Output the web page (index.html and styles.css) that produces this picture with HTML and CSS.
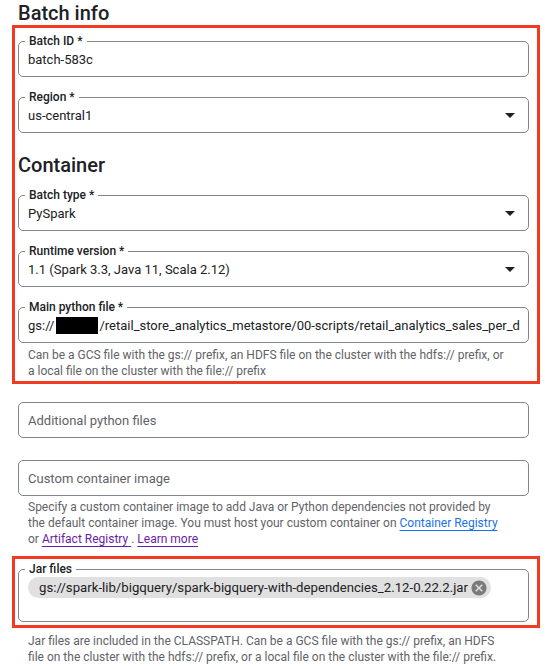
FILE: index.html
```html
<!DOCTYPE html>
<html lang="en">
<head>
<meta charset="utf-8">
<title>Batch info</title>
<link rel="stylesheet" href="styles.css">
</head>
<body>
<div class="page">
  <h2 class="heading first">Batch info</h2>
  <div class="box box-top">
    <div class="field">
      <span class="label">Batch ID *</span>
      <span class="value">batch-583c</span>
    </div>
    <div class="field select">
      <span class="label">Region *</span>
      <span class="value">us-central1</span>
      <span class="arrow"></span>
    </div>
    <h2 class="heading second">Container</h2>
    <div class="field select first-in-section">
      <span class="label">Batch type *</span>
      <span class="value">PySpark</span>
      <span class="arrow"></span>
    </div>
    <div class="field select">
      <span class="label">Runtime version *</span>
      <span class="value">1.1 (Spark 3.3, Java 11, Scala 2.12)</span>
      <span class="arrow"></span>
    </div>
    <div class="field">
      <span class="label">Main python file *</span>
      <span class="value clip">gs://<span class="redact"></span>/retail_store_analytics_metastore/00-scripts/retail_analytics_sales_per_dept.py</span>
    </div>
    <p class="hint">Can be a GCS file with the gs:// prefix, an HDFS file on the cluster with the hdfs:// prefix, or<br>a local file on the cluster with the file:// prefix</p>
  </div>

  <div class="field plain additional">
    <span class="placeholder">Additional python files</span>
  </div>
  <div class="field plain custom">
    <span class="placeholder">Custom container image</span>
  </div>
  <p class="hint plain-hint">Specify a custom container image to add Java or Python dependencies not provided by<br>the default container image. You must host your custom container on <a class="link" href="#">Container Registry</a><br>or <a class="link visited" href="#">Artifact Registry </a>. <a class="link visited" href="#">Learn more</a></p>

  <div class="box box-jar">
    <div class="field jar">
      <span class="label">Jar files</span>
      <span class="chip">
        <span class="chip-text">gs://spark-lib/bigquery/spark-bigquery-with-dependencies_2.12-0.22.2.jar</span>
        <svg class="chip-x" viewBox="0 0 24 24" width="18" height="18"><path d="M12 2C6.470 2 2 6.470 2 12s4.470 10 10 10 10-4.470 10-10S17.530 2 12 2zm5 13.590L15.590 17 12 13.410 8.410 17 7 15.590 10.590 12 7 8.410 8.410 7 12 10.590 15.590 7 17 8.410 13.410 12 17 15.590z"/></svg>
      </span>
    </div>
  </div>
  <p class="hint plain-hint jar-hint">Jar files are included in the CLASSPATH. Can be a GCS file with the gs:// prefix, an HDFS<br>file on the cluster with the hdfs:// prefix, or a local file on the cluster with the file:// prefix.</p>
</div>
</body>
</html>
```

FILE: styles.css
```css
* { box-sizing: border-box; }
html, body { margin: 0; padding: 0; background: #ffffff; }
body {
  font-family: Roboto, "Liberation Sans", Arial, sans-serif;
  color: #202124;
  width: 545px;
  height: 669px;
  overflow: hidden;
}
.page {
  padding-left: 12px;
  display: flex;
  flex-direction: column;
  align-items: flex-start;
}
.heading {
  margin: 0;
  font-size: 20px;
  line-height: 24px;
  font-weight: 500;
  color: #202124;
}
.heading.first { margin-top: 1px; margin-left: 6px; }
.heading.second { margin-top: 20px; }

.box {
  width: 528px;
  border: 3px solid #f03a22;
  padding: 13px 8px 2px 3px;
  display: flex;
  flex-direction: column;
}
.box-jar { margin-top: 9px; padding: 10px 8px 3px 3px; }

.field {
  position: relative;
  width: 511px;
  height: 36px;
  border: 1px solid #80868b;
  border-radius: 5px;
  padding: 0 8px 0 9px;
  display: flex;
  align-items: center;
  font-size: 13px;
  line-height: 20px;
  flex-shrink: 0;
}
.box .field + .field { margin-top: 20px; }
.box .field.first-in-section { margin-top: 18px; }

.label {
  position: absolute;
  left: 6px;
  top: -9px;
  padding: 0 4px;
  background: #ffffff;
  font-size: 12px;
  line-height: 16px;
  font-weight: 500;
  color: #202124;
  white-space: nowrap;
}
.value { color: #202124; white-space: nowrap; padding-top: 1px; }
.value.clip { overflow: hidden; display: flex; align-items: center; }
.redact {
  display: inline-block;
  width: 42px;
  height: 17px;
  background: #000;
  margin: 0 1px 0 2px;
  flex-shrink: 0;
}
.placeholder { color: #5f6368; white-space: nowrap; padding-top: 1px; }

.select .arrow {
  position: absolute;
  right: 13px;
  top: 50%;
  margin-top: -2px;
  width: 0;
  height: 0;
  border-left: 5px solid transparent;
  border-right: 5px solid transparent;
  border-top: 5px solid #202124;
}

.hint {
  margin: 4px 0 0 0;
  padding-left: 10px;
  font-size: 12px;
  line-height: 16px;
  color: #5f6368;
  white-space: nowrap;
}
.plain { margin-left: 6px; }
.plain-hint { margin-left: 6px; margin-top: 3px; }
.additional { margin-top: 18px; }
.custom { margin-top: 22px; }
.jar-hint { margin-top: 5px; }

.link {
  color: #1a73e8;
  text-decoration: underline;
  text-underline-offset: 3px;
}
.link.visited { color: #681da8; }

.field.jar {
  height: 53px;
  align-items: flex-start;
  padding-top: 7px;
}
.chip {
  display: inline-flex;
  align-items: center;
  height: 21px;
  background: #e0e0e0;
  border-radius: 11px;
  padding: 0 3px 0 11px;
  font-size: 13.2px;
  color: #202124;
  white-space: nowrap;
}
.chip-text { padding-top: 1px; }
.chip-x { fill: #7a7a7a; margin-left: 2px; }
```
